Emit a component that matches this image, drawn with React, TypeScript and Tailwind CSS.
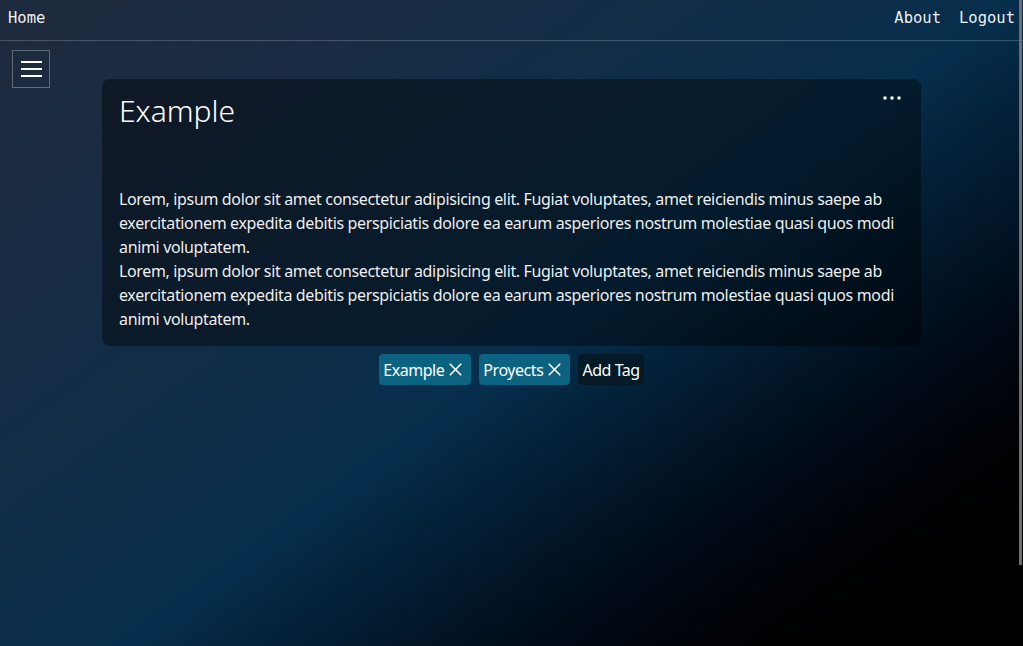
import { X } from 'lucide-react';

const lorem =
  'Lorem, ipsum dolor sit amet consectetur adipisicing elit. Fugiat voluptates, amet reiciendis minus saepe ab exercitationem expedita debitis perspiciatis dolore ea earum asperiores nostrum molestiae quasi quos modi animi voluptatem.';

export default function App() {
  const tags = ['Example', 'Proyects'];

  return (
    <div className="relative min-h-[738px] w-full bg-gradient-to-br from-[#1f2a3d] via-[#062e4c] via-50% to-black to-90% text-white font-['Noto_Sans',sans-serif]">
      {/* Navbar */}
      <nav className="flex h-[41px] items-center justify-between border-b border-white/20 px-2 font-['DejaVu_Sans_Mono',monospace] text-[15.5px] text-white/95">
        <a className="pb-[2px]">Home</a>
        <div className="flex gap-[18px] pb-[2px]">
          <a>About</a>
          <a>Logout</a>
        </div>
      </nav>

      {/* Sidebar toggle */}
      <button className="absolute left-[12px] top-[50px] flex h-[38px] w-[38px] flex-col items-center justify-center gap-[5px] border border-white/30">
        <span className="block h-[2px] w-[21px] bg-white" />
        <span className="block h-[2px] w-[21px] bg-white" />
        <span className="block h-[2px] w-[21px] bg-white" />
      </button>

      <main className="flex flex-col items-center pt-[38px]">
        {/* Note card */}
        <div className="relative w-[819px] rounded-lg bg-black/40 px-[17px] pb-[15px] pt-[14px]">
          <button className="absolute right-[20px] top-[17px] flex">
            <svg width="18" height="4" viewBox="0 0 18 4" fill="white">
              <circle cx="2" cy="2" r="1.8" />
              <circle cx="9" cy="2" r="1.8" />
              <circle cx="16" cy="2" r="1.8" />
            </svg>
          </button>
          <h1 className="text-[30px] font-light leading-[36px]">Example</h1>
          <div className="mt-[58px] text-[16px] leading-[24px] tracking-[-0.35px] text-white/95">
            <p>{lorem}</p>
            <p>{lorem}</p>
          </div>
        </div>

        {/* Tags */}
        <div className="mt-[8px] flex gap-[8px] text-[16px] tracking-[-0.45px]">
          {tags.map((tag) => (
            <span key={tag} className="flex h-[31px] items-center gap-[1px] rounded-sm bg-[#0c6381] pl-[4px] pr-[5px]">
              {tag}
              <X size={21} strokeWidth={1.9} />
            </span>
          ))}
          <button className="flex h-[31px] items-center rounded-sm bg-[#051a27] px-[4px]">Add Tag</button>
        </div>
      </main>

      {/* Scrollbar thumb */}
      <div className="fixed right-[1px] top-0 h-[565px] w-[3px] bg-[#6e6e6e]" />
    </div>
  );
}
